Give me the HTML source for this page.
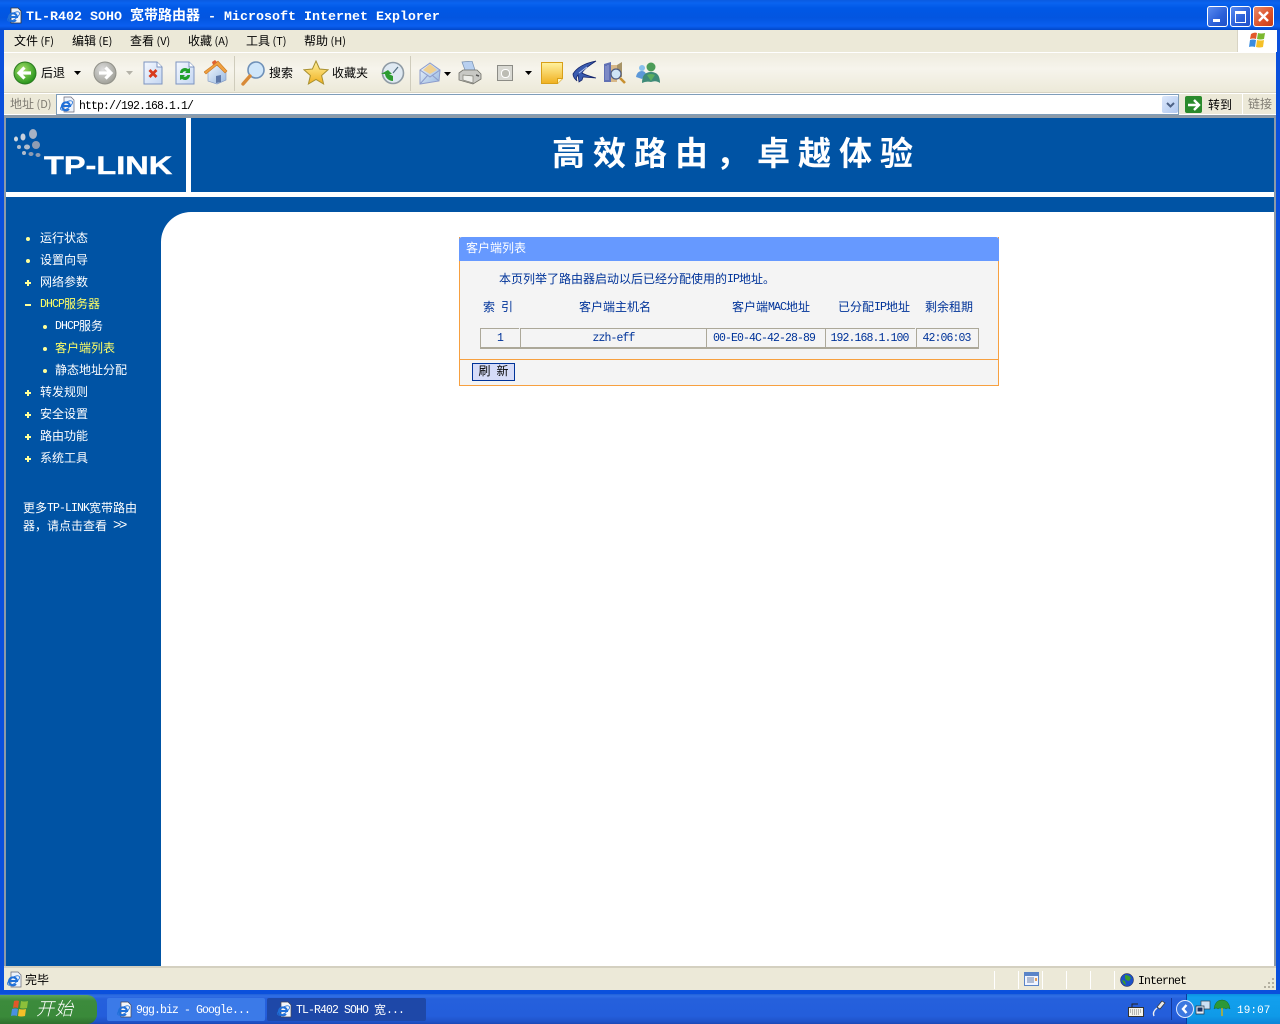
<!DOCTYPE html>
<html><head><meta charset="utf-8"><title>TL-R402 SOHO</title>
<style>
html,body{margin:0;padding:0;width:1280px;height:1024px;overflow:hidden;background:#fff}
body{position:relative;font-family:"WenQuanYi Zen Hei","Noto Sans CJK SC",sans-serif;font-size:12px;color:#000}
div,svg,span.a{position:absolute}
.t{white-space:nowrap;line-height:14px;height:14px}
i{font-style:normal;font-family:"Liberation Mono",monospace;font-size:11.5px;letter-spacing:-.9px;position:relative;top:-1px}
.b{color:#003399}
.w{color:#fff}
.y{color:#ffff66}
.g{color:#7f7c73}
.dot{width:4px;height:4px;background:#ffff99;border-radius:2px}
.pl{width:6px;height:2px;background:#ffff99}
.pv{width:2px;height:6px;background:#ffff99}
.c{border-left:1px solid #aca899;border-top:1px solid #aca899;top:328px;height:18px;line-height:18px;text-align:center;color:#003399;white-space:nowrap}
.m{display:inline-block;width:6px}
</style></head><body>
<svg width="0" height="0" style="left:0;top:0"><defs>
<radialGradient id="gr" cx=".4" cy=".35" r=".7"><stop offset="0" stop-color="#a6e06a"/><stop offset="1" stop-color="#1f8f16"/></radialGradient>
<radialGradient id="gy" cx=".4" cy=".35" r=".7"><stop offset="0" stop-color="#dedede"/><stop offset="1" stop-color="#9c9c94"/></radialGradient>
<linearGradient id="pg" x1="0" y1="0" x2="1" y2="1"><stop offset="0" stop-color="#f4f8ff"/><stop offset="1" stop-color="#c4d6f2"/></linearGradient>
<linearGradient id="st" x1="0" y1="0" x2="0" y2="1"><stop offset="0" stop-color="#fff2a0"/><stop offset="1" stop-color="#f0b020"/></linearGradient>
<linearGradient id="wl" x1="0" y1="0" x2="1" y2="1"><stop offset="0" stop-color="#f0f6fc"/><stop offset="1" stop-color="#98b8e0"/></linearGradient>
</defs></svg>

<!-- window frame -->
<div style="left:0;top:0;width:1280px;height:30px;background:linear-gradient(#0a5be0 0,#0a64f0 3px,#0058e6 8px,#0355e0 18px,#0a5ff0 26px,#0247c8 30px)"></div>
<div style="left:0;top:30px;width:4px;height:964px;background:#0a50dc"></div>
<div style="left:1276px;top:30px;width:4px;height:964px;background:#0a50dc"></div>
<div style="left:0;top:990px;width:1280px;height:4px;background:#0a50dc"></div>

<!-- title -->
<svg style="left:6px;top:7px" width="16" height="17" viewBox="0 0 16 17"><path d="M5 1h7l3 3v12H5z" fill="#eef3fb" stroke="#333" stroke-width=".8"/><path d="M3.500 10H11A4 4 0 1 0 10 13" fill="none" stroke="#1f6fd8" stroke-width="2"/><ellipse cx="7.500" cy="9.500" rx="7" ry="3" transform="rotate(-35 7.500 9.500)" fill="none" stroke="#1f6fd8" stroke-width=".8"/></svg>
<div class="t w" style="left:26px;top:8px;font-weight:bold;font-size:14px"><i style="font-size:13.33px;letter-spacing:0;font-weight:bold;top:0">TL-R402 SOHO </i>宽带路由器<i style="font-size:13.33px;letter-spacing:0;font-weight:bold;top:0"> - Microsoft Internet Explorer</i></div>

<!-- window buttons -->
<div style="left:1207px;top:6px;width:19px;height:19px;border:1px solid #fff;border-radius:3px;background:linear-gradient(135deg,#5a8cf0,#2a5fd8 60%,#2050c8)"></div>
<div style="left:1213px;top:19px;width:7px;height:3px;background:#fff"></div>
<div style="left:1230px;top:6px;width:19px;height:19px;border:1px solid #fff;border-radius:3px;background:linear-gradient(135deg,#5a8cf0,#2a5fd8 60%,#2050c8)"></div>
<div style="left:1235px;top:11px;width:9px;height:8px;border:1px solid #fff;border-top:3px solid #fff"></div>
<div style="left:1253px;top:6px;width:19px;height:19px;border:1px solid #fff;border-radius:3px;background:linear-gradient(135deg,#e88a68,#dc5028 60%,#c43c18)"></div>
<svg style="left:1254px;top:7px" width="19" height="19" viewBox="0 0 19 19"><path d="M5 5l9 9M14 5l-9 9" stroke="#fff" stroke-width="2.400"/></svg>

<!-- bars -->
<div style="left:4px;top:30px;width:1272px;height:86px;background:#ece9d8"></div>
<div style="left:4px;top:52px;width:1272px;height:1px;background:#fff"></div>
<div style="left:4px;top:53px;width:1272px;height:40px;background:linear-gradient(#efecdf,#f6f4ec 40%,#ece9d8)"></div>
<div style="left:4px;top:92px;width:1272px;height:1px;background:#d8d4c4"></div>
<div style="left:4px;top:93px;width:1272px;height:1px;background:#fff"></div>
<div style="left:4px;top:114px;width:1272px;height:1px;background:#fff"></div>
<div style="left:4px;top:115px;width:1272px;height:3px;background:#8c9aa8"></div>

<!-- menu -->
<div class="t" style="left:14px;top:34px">文件<span style="font-size:11px"> (F)</span></div>
<div class="t" style="left:72px;top:34px">编辑<span style="font-size:11px"> (E)</span></div>
<div class="t" style="left:130px;top:34px">查看<span style="font-size:11px"> (V)</span></div>
<div class="t" style="left:188px;top:34px">收藏<span style="font-size:11px"> (A)</span></div>
<div class="t" style="left:246px;top:34px">工具<span style="font-size:11px"> (T)</span></div>
<div class="t" style="left:304px;top:34px">帮助<span style="font-size:11px"> (H)</span></div>
<div style="left:1237px;top:30px;width:39px;height:22px;background:#fff;border-left:1px solid #d8d4c4"></div>
<svg style="left:1247px;top:31px" width="20" height="19" viewBox="0 0 20 19"><path d="M4 3q3-2 6-1l-1 6q-3-1-6 0z" fill="#e2582a"/><path d="M11 2q3 1 7 0l-1 6q-4 1-7 0z" fill="#7cb82f"/><path d="M3 9q3-1 6 0l-1 7q-3-1-6 0z" fill="#3a8ce0"/><path d="M10 9q4 1 7 0l-1 7q-4 1-7 0z" fill="#f5c028"/></svg>

<!-- toolbar -->
<svg style="left:13px;top:61px" width="24" height="24" viewBox="0 0 24 24"><circle cx="12" cy="12" r="11" fill="url(#gr)" stroke="#2a7a1f"/><path d="M18 12H7M11.500 6.500L6 12l5.500 5.500" fill="none" stroke="#fff" stroke-width="3.200"/></svg>
<div class="t" style="left:41px;top:66px">后退</div>
<svg style="left:74px;top:71px" width="7" height="4"><path d="M0 0h7L3.500 4z"/></svg>
<svg style="left:93px;top:61px" width="24" height="24" viewBox="0 0 24 24"><circle cx="12" cy="12" r="11" fill="url(#gy)" stroke="#909088"/><path d="M6 12h11M12.500 6.500L18 12l-5.500 5.500" fill="none" stroke="#fff" stroke-width="3.200"/></svg>
<svg style="left:126px;top:71px" width="7" height="4"><path d="M0 0h7L3.500 4z" fill="#b4b2a8"/></svg>
<svg style="left:143px;top:61px" width="20" height="24" viewBox="0 0 20 24"><path d="M1 1h13l5 5v17H1z" fill="url(#pg)" stroke="#7d94c0"/><path d="M14 1v5h5" fill="#fff" stroke="#7d94c0"/><path d="M6.500 9l7 7M13.500 9l-7 7" stroke="#d83a1c" stroke-width="2.800"/></svg>
<svg style="left:175px;top:61px" width="20" height="24" viewBox="0 0 20 24"><path d="M1 1h13l5 5v17H1z" fill="url(#pg)" stroke="#7d94c0"/><path d="M14 1v5h5" fill="#fff" stroke="#7d94c0"/><path d="M5 12a5 5 0 0 1 8-4l2-1v5h-5l1.500-1.500A3 3 0 0 0 7.500 12z" fill="#1fa02a"/><path d="M15 14a5 5 0 0 1-8 4l-2 1v-5h5l-1.500 1.500a3 3 0 0 0 4 -1.500z" fill="#1fa02a"/></svg>
<svg style="left:204px;top:60px" width="24" height="25" viewBox="0 0 24 25"><path d="M4 12v9l9 3 9-4V11L12 5z" fill="url(#wl)" stroke="#7d94c0" stroke-width=".6"/><path d="M12 16l5-1v7l-5 1z" fill="#5e78a8"/><path d="M0 12L12 3l2-2 9 10-2 2-8-8-11 9z" fill="#f0a040" stroke="#c87820" stroke-width=".6"/><path d="M8 2l3-2 2 2-4 3z" fill="#e06030"/></svg>
<div style="left:234px;top:56px;width:1px;height:35px;background:#cfccbc"></div>
<svg style="left:241px;top:60px" width="25" height="26" viewBox="0 0 25 26"><circle cx="15" cy="10" r="8" fill="#cfe6fa" stroke="#6e90b8" stroke-width="1.600"/><path d="M2 24l7-8" stroke="#d88a38" stroke-width="3.400" stroke-linecap="round"/></svg>
<div class="t" style="left:269px;top:66px">搜索</div>
<svg style="left:303px;top:60px" width="26" height="26" viewBox="0 0 26 26"><path d="M13 1l3.600 8 8.400.8-6.400 5.700 2 8.500L13 19.500 5.400 24l2-8.500L1 9.800 9.400 9z" fill="url(#st)" stroke="#a89030" stroke-width="1"/></svg>
<div class="t" style="left:332px;top:66px">收藏夹</div>
<svg style="left:380px;top:61px" width="25" height="24" viewBox="0 0 25 24"><circle cx="13" cy="12" r="10.500" fill="#dfe9f2" stroke="#8e9aa4" stroke-width="1.600"/><path d="M13 12l5-6" stroke="#506c80" stroke-width="1.200"/><path d="M1 13h4a8 8 0 0 0 8 7v-5l-4-2h3l-4-4-7 4z" fill="#2c9c30"/></svg>
<div style="left:410px;top:56px;width:1px;height:35px;background:#cfccbc"></div>
<svg style="left:419px;top:61px" width="23" height="24" viewBox="0 0 23 24"><path d="M1 9L11 2l10 7-1 11-19 3z" fill="url(#wl)" stroke="#8c9ccc"/><path d="M4 9l7-6 7 6-7 4z" fill="#f0d090"/><path d="M1 9l10 7 10-7M1 23l8-9M20 20l-7-6" fill="none" stroke="#8c9ccc"/></svg>
<svg style="left:444px;top:72px" width="7" height="4"><path d="M0 0h7L3.500 4z"/></svg>
<svg style="left:458px;top:61px" width="24" height="24" viewBox="0 0 24 24"><path d="M4 1l10-1 3 9H7z" fill="#b8d0f0" stroke="#7890b0" stroke-width=".7"/><path d="M1 12l4-3h14l4 4v5l-8 5-14-4z" fill="#c8c8c4" stroke="#707068" stroke-width=".8"/><path d="M5 14l10 1v7l-10-3z" fill="#eeeeea" stroke="#808078" stroke-width=".7"/><path d="M18 14l3 1" stroke="#555" stroke-width="1.500"/></svg>
<div style="left:497px;top:65px;width:14px;height:14px;background:#d8d8d2;border:1px solid #8c8c86"></div>
<div style="left:501px;top:69px;width:7px;height:7px;border:1px solid #fff;border-radius:4px;background:#bcbcb4"></div>
<svg style="left:525px;top:71px" width="7" height="4"><path d="M0 0h7L3.500 4z"/></svg>
<svg style="left:541px;top:62px" width="22" height="22" viewBox="0 0 22 22"><path d="M.5.500h21v16l-5 5H.500z" fill="url(#st)" stroke="#d8a018"/><path d="M16.500 21.500v-5h5" fill="#fff4c0" stroke="#d8a018"/></svg>
<svg style="left:571px;top:60px" width="26" height="25" viewBox="0 0 26 25"><path d="M25 1C15 3 6 7 2 14c0 3 2 5 4 7-1-2-1-4 1-6l1 7 3-2 1-3 13 1c-7-2-11-3-14-5C13 9 19 5 25 1z" fill="#3a5cb0" stroke="#14246a" stroke-width=".8"/><path d="M8 13l8-6" stroke="#b8c8f0"/></svg>
<svg style="left:603px;top:61px" width="24" height="24" viewBox="0 0 24 24"><path d="M1 3l7-2v20H1z" fill="#6070b4"/><path d="M3 5v14M5 4v15" stroke="#9aa4d8"/><path d="M8 4h6v17H8z" fill="#d8b888"/><path d="M14 4l5-3v15h-5z" fill="#a89468"/><circle cx="13" cy="13" r="5" fill="#cfe4f6" stroke="#505c80" stroke-width="1.200"/><path d="M17 17l5 5" stroke="#c89030" stroke-width="2.600"/></svg>
<svg style="left:635px;top:62px" width="26" height="22" viewBox="0 0 26 22"><circle cx="7" cy="6" r="3" fill="#88c0ec"/><path d="M1 15q1-6 6-6 3 0 4 3l-4 5z" fill="#5c98d8"/><circle cx="16" cy="5" r="4.500" fill="#4c9c58"/><path d="M7 21q0-11 9-11t9 11q-4-3-9-1-5-1-9 1z" fill="#3e8a78"/><path d="M12 13q4-2 8 0l-4 6z" fill="#5cae60"/></svg>

<!-- address bar -->
<div class="t g" style="left:10px;top:97px">地址<span style="font-size:11px"> (D)</span></div>
<div style="left:56px;top:94px;width:1121px;height:19px;background:#fff;border:1px solid #7f9db9"></div>
<svg style="left:59px;top:96px" width="16" height="17" viewBox="0 0 16 17"><path d="M5 1h7l3 3v12H5z" fill="#eef3fb" stroke="#667" stroke-width=".7"/><path d="M3.500 10H11A4 4 0 1 0 10 13" fill="none" stroke="#1f6fd8" stroke-width="2"/><ellipse cx="7.500" cy="9.500" rx="7" ry="3" transform="rotate(-35 7.500 9.500)" fill="none" stroke="#1f6fd8" stroke-width=".8"/></svg>
<div class="t" style="left:79px;top:99px"><i>http://192.168.1.1/</i></div>
<div style="left:1162px;top:96px;width:16px;height:17px;background:linear-gradient(135deg,#dce8fb,#b0c8f0);border-radius:2px"></div>
<svg style="left:1166px;top:102px" width="9" height="7" viewBox="0 0 9 7"><path d="M1 1l3.500 3.500L8 1" fill="none" stroke="#4d6185" stroke-width="2"/></svg>
<div style="left:1185px;top:96px;width:17px;height:17px;background:#2a8a2c;border-radius:2px"></div>
<svg style="left:1186px;top:97px" width="16" height="16" viewBox="0 0 16 16"><path d="M2 8h11M8 3l5 5-5 5" fill="none" stroke="#fff" stroke-width="2.400"/></svg>
<div class="t" style="left:1208px;top:98px">转到</div>
<div style="left:1242px;top:94px;width:1px;height:20px;background:#fff"></div>
<div class="t g" style="left:1248px;top:97px">链接</div>

<!-- page -->
<div style="left:4px;top:118px;width:2px;height:848px;background:#8c9aa8"></div>
<div style="left:1274px;top:118px;width:2px;height:848px;background:#8c9aa8"></div>
<div style="left:6px;top:118px;width:1268px;height:848px;background:#fff"></div>
<div style="left:6px;top:118px;width:180px;height:74px;background:#0053a4"></div>
<div style="left:191px;top:118px;width:1083px;height:74px;background:#0053a4"></div>
<div style="left:6px;top:197px;width:1268px;height:15px;background:#0053a4"></div>
<div style="left:6px;top:212px;width:155px;height:754px;background:#0053a4"></div>
<svg style="left:161px;top:212px" width="30" height="30" viewBox="0 0 30 30"><path d="M0 0h30A30 30 0 0 0 0 30z" fill="#0053a4"/></svg>

<!-- logo -->
<svg style="left:12px;top:128px" width="32" height="34" viewBox="0 0 32 34"><g fill="#b0bccc"><ellipse cx="21" cy="6" rx="4" ry="5" fill="#a8b2c4"/><ellipse cx="11" cy="9" rx="2.500" ry="3.500" fill="#c8d0dc"/><ellipse cx="4" cy="11" rx="2" ry="2.500" fill="#d0d8e0"/><ellipse cx="24" cy="17" rx="4" ry="4" fill="#8f9cb2"/><ellipse cx="15" cy="19" rx="3" ry="2.500"/><ellipse cx="7" cy="19" rx="2" ry="2"/><ellipse cx="12" cy="25" rx="2" ry="2"/><ellipse cx="19" cy="26" rx="2.500" ry="2" fill="#8f9cb2"/><ellipse cx="26" cy="27" rx="2.500" ry="2" fill="#8f9cb2"/></g></svg>
<div class="t w" style="left:44px;top:151px;height:30px;font:900 25px/30px 'Liberation Sans',sans-serif;transform-origin:0 50%;transform:scaleX(1.3);-webkit-text-stroke:.4px #fff">TP-LINK</div>

<div class="t w" style="left:552px;top:129px;height:44px;line-height:44px;font-family:'Noto Sans CJK SC',sans-serif;font-size:33px;letter-spacing:8px;font-weight:700">高效路由，卓越体验</div>

<!-- sidebar -->
<div class="dot" style="left:26px;top:237px"></div><div class="t w" style="left:40px;top:231px">运行状态</div>
<div class="dot" style="left:26px;top:259px"></div><div class="t w" style="left:40px;top:253px">设置向导</div>
<div class="pl" style="left:25px;top:282px"></div><div class="pv" style="left:27px;top:280px"></div><div class="t w" style="left:40px;top:275px">网络参数</div>
<div class="pl" style="left:25px;top:304px"></div><div class="t y" style="left:40px;top:297px"><i>DHCP</i>服务器</div>
<div class="dot" style="left:43px;top:325px"></div><div class="t w" style="left:55px;top:319px"><i>DHCP</i>服务</div>
<div class="dot" style="left:43px;top:347px"></div><div class="t y" style="left:55px;top:341px">客户端列表</div>
<div class="dot" style="left:43px;top:369px"></div><div class="t w" style="left:55px;top:363px">静态地址分配</div>
<div class="pl" style="left:25px;top:392px"></div><div class="pv" style="left:27px;top:390px"></div><div class="t w" style="left:40px;top:385px">转发规则</div>
<div class="pl" style="left:25px;top:414px"></div><div class="pv" style="left:27px;top:412px"></div><div class="t w" style="left:40px;top:407px">安全设置</div>
<div class="pl" style="left:25px;top:436px"></div><div class="pv" style="left:27px;top:434px"></div><div class="t w" style="left:40px;top:429px">路由功能</div>
<div class="pl" style="left:25px;top:458px"></div><div class="pv" style="left:27px;top:456px"></div><div class="t w" style="left:40px;top:451px">系统工具</div>
<div class="t w" style="left:23px;top:501px">更多<i>TP-LINK</i>宽带路由</div>
<div class="t w" style="left:23px;top:519px">器，请点击查看</div>
<div class="t w" style="left:113px;top:519px;font:14px/14px 'Liberation Mono',monospace;letter-spacing:-2.400px">&gt;&gt;</div>

<!-- panel -->
<div style="left:459px;top:237px;width:540px;height:149px;background:#f4f4f4;box-sizing:border-box;border:1px solid #f7a040;border-top:none"></div>
<div style="left:459px;top:237px;width:540px;height:24px;background:#6699ff;border-radius:3px 3px 0 0"></div>
<div class="t w" style="left:466px;top:241px">客户端列表</div>
<div class="t b" style="left:499px;top:272px">本页列举了路由器启动以后已经分配使用的<i>IP</i>地址。</div>
<div class="t b" style="left:483px;top:300px">索<span class="m"></span>引</div>
<div class="t b" style="left:579px;top:300px">客户端主机名</div>
<div class="t b" style="left:732px;top:300px">客户端<i>MAC</i>地址</div>
<div class="t b" style="left:838px;top:300px">已分配<i>IP</i>地址</div>
<div class="t b" style="left:925px;top:300px">剩余租期</div>

<div class="c" style="left:480px;width:38px"><i>1</i></div>
<div class="c" style="left:520px;width:185px"><i>zzh-eff</i></div>
<div class="c" style="left:706px;width:114px;padding-right:4px"><i>00-E0-4C-42-28-89</i></div>
<div class="c" style="left:825px;width:87px;padding-right:2px"><i>192.168.1.100</i></div>
<div class="c" style="left:916px;width:59px;padding-right:2px;border-right:1px solid #aca899"><i>42:06:03</i></div>
<div style="left:480px;top:347px;width:499px;height:2px;background:#aca899"></div>
<div style="left:460px;top:359px;width:538px;height:1px;background:#f7a040"></div>
<div class="t" style="left:472px;top:363px;width:41px;height:16px;line-height:14px;background:#d6dcf8;border:1px solid #003399;text-align:center">刷<span class="m"></span>新</div>

<!-- status bar -->
<div style="left:4px;top:966px;width:1272px;height:2px;background:#d4d0c0"></div>
<div style="left:4px;top:968px;width:1272px;height:22px;background:#ece9d8"></div>
<svg style="left:6px;top:971px" width="16" height="17" viewBox="0 0 16 17"><path d="M5 1h7l3 3v12H5z" fill="#eef3fb" stroke="#667" stroke-width=".7"/><path d="M3.500 10H11A4 4 0 1 0 10 13" fill="none" stroke="#1f6fd8" stroke-width="2"/><ellipse cx="7.500" cy="9.500" rx="7" ry="3" transform="rotate(-35 7.500 9.500)" fill="none" stroke="#1f6fd8" stroke-width=".8"/></svg>
<div class="t" style="left:25px;top:973px">完毕</div>
<div style="left:994px;top:971px;width:1px;height:18px;background:#fff"></div>
<div style="left:1018px;top:971px;width:1px;height:18px;background:#fff"></div>
<div style="left:1042px;top:971px;width:1px;height:18px;background:#fff"></div>
<div style="left:1066px;top:971px;width:1px;height:18px;background:#fff"></div>
<div style="left:1090px;top:971px;width:1px;height:18px;background:#fff"></div>
<div style="left:1114px;top:971px;width:1px;height:18px;background:#fff"></div>
<svg style="left:1024px;top:972px" width="15" height="14" viewBox="0 0 15 14"><path d="M.5.500h14v13H.500z" fill="#f0f4ff" stroke="#5a84c8"/><path d="M1 1h13v3H1z" fill="#5a84c8"/><path d="M3 6h7M3 8h7M3 10h7" stroke="#6a80a8"/><path d="M12 6v3" stroke="#e08020" stroke-width="1.500"/></svg>
<svg style="left:1120px;top:973px" width="14" height="14" viewBox="0 0 14 14"><circle cx="7" cy="7" r="6.500" fill="#1c50c8" stroke="#223"  stroke-width=".5"/><path d="M5 2q4 0 6 3l-2 3-3-1-1-2zM2 7l3 1 1 4q-3-1-4-5z" fill="#3a9c2c"/></svg>
<div class="t" style="left:1138px;top:974px"><i>Internet</i></div>
<svg style="left:1264px;top:977px" width="12" height="12" viewBox="0 0 12 12" fill="#b4b0a0"><path d="M8 1h2v2H8zM4 5h2v2H4zM8 5h2v2H8zM0 9h2v2H0zM4 9h2v2H4zM8 9h2v2H8z"/></svg>

<!-- taskbar -->
<div style="left:0;top:994px;width:1280px;height:30px;background:linear-gradient(#1f5fd8 0,#2f6fe6 2px,#2560dc 5px,#245edb 22px,#1f52c8 28px,#1a48b4 30px)"></div>
<div style="left:1186px;top:994px;width:94px;height:30px;background:linear-gradient(#0c8fe0,#12a0ee 3px,#0f9ae8 22px,#0c84d8 30px);border-left:1px solid #0a3ca0"></div>
<div style="left:0;top:995px;width:97px;height:29px;background:linear-gradient(#5da35d,#3c8b3c 20%,#3a8a3a 75%,#2e6e2e);border-radius:0 10px 10px 0"></div>
<svg style="left:10px;top:999px" width="20" height="20" viewBox="0 0 20 20"><path d="M4 2q3-1 5 0l-1 7q-3-1-5 0z" fill="#e2582a"/><path d="M11 2q3 1 7 0l-1 7q-4 1-7 0z" fill="#8cc03a"/><path d="M2 10q3-1 6 0l-1 7q-3-1-6 0z" fill="#4a90e0"/><path d="M9 10q4 1 7 0l-1 7q-4 1-7 0z" fill="#f5c028"/></svg>
<div class="t w" style="left:36px;top:997px;height:22px;line-height:22px;font-size:18px;font-style:italic;font-family:'Noto Sans CJK SC',sans-serif;font-weight:300;letter-spacing:1px">开始</div>

<div style="left:107px;top:998px;width:158px;height:23px;background:#3b7ae8;border-radius:2px"></div>
<div style="left:267px;top:998px;width:159px;height:23px;background:#1e48a8;border-radius:2px"></div>
<svg style="left:116px;top:1001px" width="16" height="17" viewBox="0 0 16 17"><path d="M5 1h7l3 3v12H5z" fill="#f4f6fb" stroke="#445" stroke-width=".7"/><path d="M3.500 10H11A4 4 0 1 0 10 13" fill="none" stroke="#1f6fd8" stroke-width="2"/><ellipse cx="7.500" cy="9.500" rx="7" ry="3" transform="rotate(-35 7.500 9.500)" fill="none" stroke="#1f6fd8" stroke-width=".8"/></svg>
<div class="t w" style="left:136px;top:1003px"><i>9gg.biz - Google...</i></div>
<svg style="left:276px;top:1001px" width="16" height="17" viewBox="0 0 16 17"><path d="M5 1h7l3 3v12H5z" fill="#f4f6fb" stroke="#445" stroke-width=".7"/><path d="M3.500 10H11A4 4 0 1 0 10 13" fill="none" stroke="#1f6fd8" stroke-width="2"/><ellipse cx="7.500" cy="9.500" rx="7" ry="3" transform="rotate(-35 7.500 9.500)" fill="none" stroke="#1f6fd8" stroke-width=".8"/></svg>
<div class="t w" style="left:296px;top:1003px"><i>TL-R402 SOHO </i>宽<i>...</i></div>

<!-- tray -->
<svg style="left:1128px;top:1002px" width="16" height="15" viewBox="0 0 16 15"><path d="M.5 5.500h15v9H.500z" fill="#f4f4ec" stroke="#333"/><path d="M2 8h12M2 10h12M4 12h8" stroke="#777" stroke-dasharray="1 1"/><path d="M4 5V2h6" fill="none" stroke="#222"/></svg>
<svg style="left:1151px;top:1000px" width="15" height="18" viewBox="0 0 15 18"><path d="M11 1l3 2-5 6-3-2z" fill="#e8e8e8" stroke="#333" stroke-width=".7"/><path d="M6 8Q1 12 3 16" fill="none" stroke="#f0f0f0" stroke-width="1.400"/></svg>
<div style="left:1171px;top:998px;width:1px;height:22px;background:#14389a"></div>
<svg style="left:1176px;top:1000px" width="18" height="18" viewBox="0 0 18 18"><circle cx="9" cy="9" r="8.500" fill="#3c78e0" stroke="#dfeaff"/><path d="M10.500 5L7 9l3.500 4" fill="none" stroke="#fff" stroke-width="2.400"/></svg>
<svg style="left:1195px;top:1000px" width="16" height="17" viewBox="0 0 16 17"><path d="M6 1h9v8H6z" fill="#cde0f4" stroke="#345"  stroke-width=".7"/><path d="M1 6h8v8H1z" fill="#e4eef8" stroke="#234" stroke-width=".7"/><path d="M2.500 7.500h5v4h-5z" fill="#1c3060"/></svg>
<svg style="left:1213px;top:999px" width="18" height="19" viewBox="0 0 18 19"><path d="M1 10Q2 1 9 1t8 9q-2-2-4 0-2-2-4 0-2-2-4 0-2-2-4 0z" fill="#2c9838" stroke="#176a24" stroke-width=".5"/><path d="M9 9v8" stroke="#c8b020" stroke-width="1.500"/></svg>
<div class="t w" style="left:1237px;top:1003px"><i style="font-size:11px;letter-spacing:.1px">19:07</i></div>
</body></html>
